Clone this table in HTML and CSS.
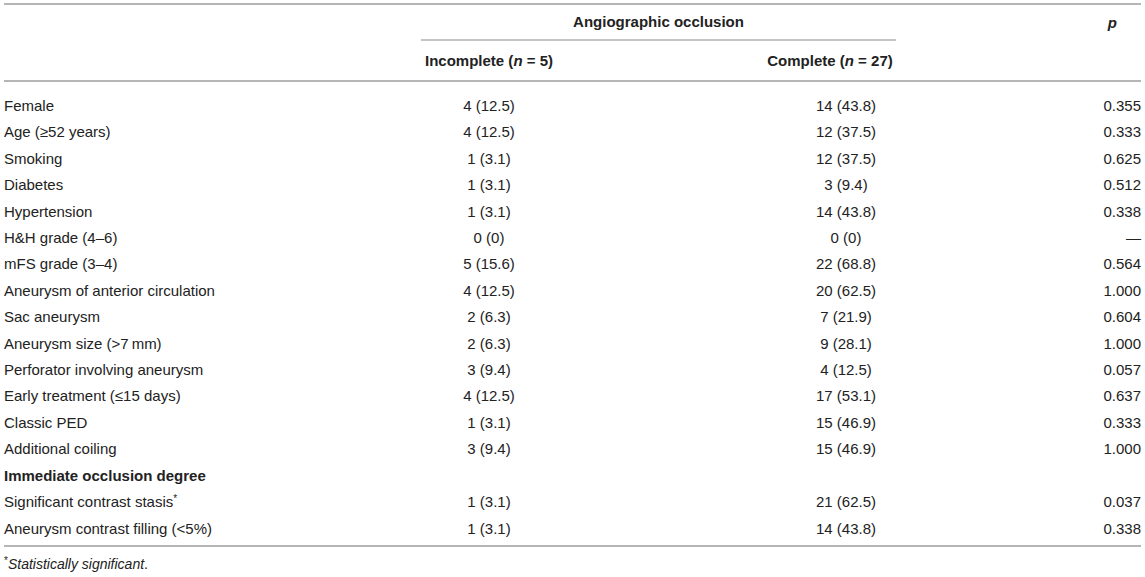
FILE: index.html
```html
<!DOCTYPE html>
<html lang="en">

<head>
    <meta charset="UTF-8">
    <meta name="viewport" content="width=device-width, initial-scale=1.0">
    <title>Angiographic occlusion</title>
    <link rel="stylesheet" href="styles.css">
</head>

<body>
    <div class="table-wrap">
        <table class="data-table">
            <colgroup>
                <col class="col-label">
                <col class="col-incomplete">
                <col class="col-complete">
                <col class="col-p">
            </colgroup>
            <thead>
                <tr class="head-top">
                    <th></th>
                    <th colspan="2" class="group">Angiographic occlusion</th>
                    <th class="p-head"><i>p</i></th>
                </tr>
                <tr class="head-sub">
                    <th></th>
                    <th class="num">Incomplete (<i>n</i> = 5)</th>
                    <th class="num complete-head">Complete (<i>n</i> = 27)</th>
                    <th></th>
                </tr>
            </thead>
            <tbody>
                <tr>
                    <td>Female</td>
                    <td class="num">4 (12.5)</td>
                    <td class="num complete">14 (43.8)</td>
                    <td class="pval">0.355</td>
                </tr>
                <tr>
                    <td>Age (&ge;52 years)</td>
                    <td class="num">4 (12.5)</td>
                    <td class="num complete">12 (37.5)</td>
                    <td class="pval">0.333</td>
                </tr>
                <tr>
                    <td>Smoking</td>
                    <td class="num">1 (3.1)</td>
                    <td class="num complete">12 (37.5)</td>
                    <td class="pval">0.625</td>
                </tr>
                <tr>
                    <td>Diabetes</td>
                    <td class="num">1 (3.1)</td>
                    <td class="num complete">3 (9.4)</td>
                    <td class="pval">0.512</td>
                </tr>
                <tr>
                    <td>Hypertension</td>
                    <td class="num">1 (3.1)</td>
                    <td class="num complete">14 (43.8)</td>
                    <td class="pval">0.338</td>
                </tr>
                <tr>
                    <td>H&amp;H grade (4&ndash;6)</td>
                    <td class="num">0 (0)</td>
                    <td class="num complete">0 (0)</td>
                    <td class="pval dash">&mdash;</td>
                </tr>
                <tr>
                    <td>mFS grade (3&ndash;4)</td>
                    <td class="num">5 (15.6)</td>
                    <td class="num complete">22 (68.8)</td>
                    <td class="pval">0.564</td>
                </tr>
                <tr>
                    <td>Aneurysm of anterior circulation</td>
                    <td class="num">4 (12.5)</td>
                    <td class="num complete">20 (62.5)</td>
                    <td class="pval">1.000</td>
                </tr>
                <tr>
                    <td>Sac aneurysm</td>
                    <td class="num">2 (6.3)</td>
                    <td class="num complete">7 (21.9)</td>
                    <td class="pval">0.604</td>
                </tr>
                <tr>
                    <td>Aneurysm size (&gt;7&#8201;mm)</td>
                    <td class="num">2 (6.3)</td>
                    <td class="num complete">9 (28.1)</td>
                    <td class="pval">1.000</td>
                </tr>
                <tr>
                    <td>Perforator involving aneurysm</td>
                    <td class="num">3 (9.4)</td>
                    <td class="num complete">4 (12.5)</td>
                    <td class="pval">0.057</td>
                </tr>
                <tr>
                    <td>Early treatment (&le;15 days)</td>
                    <td class="num">4 (12.5)</td>
                    <td class="num complete">17 (53.1)</td>
                    <td class="pval">0.637</td>
                </tr>
                <tr>
                    <td>Classic PED</td>
                    <td class="num">1 (3.1)</td>
                    <td class="num complete">15 (46.9)</td>
                    <td class="pval">0.333</td>
                </tr>
                <tr>
                    <td>Additional coiling</td>
                    <td class="num">3 (9.4)</td>
                    <td class="num complete">15 (46.9)</td>
                    <td class="pval">1.000</td>
                </tr>
                <tr>
                    <td class="section" colspan="4">Immediate occlusion degree</td>
                </tr>
                <tr>
                    <td>Significant contrast stasis<sup>*</sup></td>
                    <td class="num">1 (3.1)</td>
                    <td class="num complete">21 (62.5)</td>
                    <td class="pval">0.037</td>
                </tr>
                <tr>
                    <td>Aneurysm contrast filling (&lt;5%)</td>
                    <td class="num">1 (3.1)</td>
                    <td class="num complete">14 (43.8)</td>
                    <td class="pval">0.338</td>
                </tr>
            </tbody>
        </table>
        <p class="footnote"><sup>*</sup><i>Statistically significant</i>.</p>
    </div>
</body>

</html>
```

FILE: styles.css
```css
body {
    margin: 0;
    padding: 0 4px;
    background-color: #fff;
    color: #222;
    font-family: "Liberation Sans", Arial, sans-serif;
    font-size: 15px;
}

.table-wrap {
    padding-top: 3px;
}

.data-table {
    width: 100%;
    border-collapse: collapse;
    table-layout: fixed;
    border-top: 2px solid #b5b5b5;
    border-bottom: 2px solid #b5b5b5;
}

.col-label {
    width: 417px;
}

.col-incomplete {
    width: 136px;
}

.col-complete {
    width: 339px;
}

.col-p {
    width: 245px;
}

th {
    font-weight: bold;
    text-align: center;
    line-height: 18px;
    padding: 0;
}

.head-top th {
    height: 32px;
    padding-bottom: 1px;
}

.head-top .group {
    border-bottom: 2px solid #c4c4c4;
}

.head-top .p-head {
    text-align: right;
    padding-right: 24px;
    padding-top: 2px;
}

.head-sub th {
    height: 39px;
    border-bottom: 2px solid #b5b5b5;
}

td {
    padding: 4px 0;
    line-height: 18.4px;
    white-space: nowrap;
}

tbody tr:first-child td {
    padding-top: 15px;
}

tbody tr:last-child td {
    padding-bottom: 7px;
}

.num {
    text-align: center;
}

.complete-head {
    padding-left: 207px;
}

.complete {
    padding-left: 239px;
}

.pval {
    text-align: right;
}

.section {
    font-weight: bold;
}

sup {
    font-size: 10px;
    line-height: 0;
    vertical-align: 5px;
}

.footnote {
    margin: 9px 0 0;
    font-size: 14px;
}
```
